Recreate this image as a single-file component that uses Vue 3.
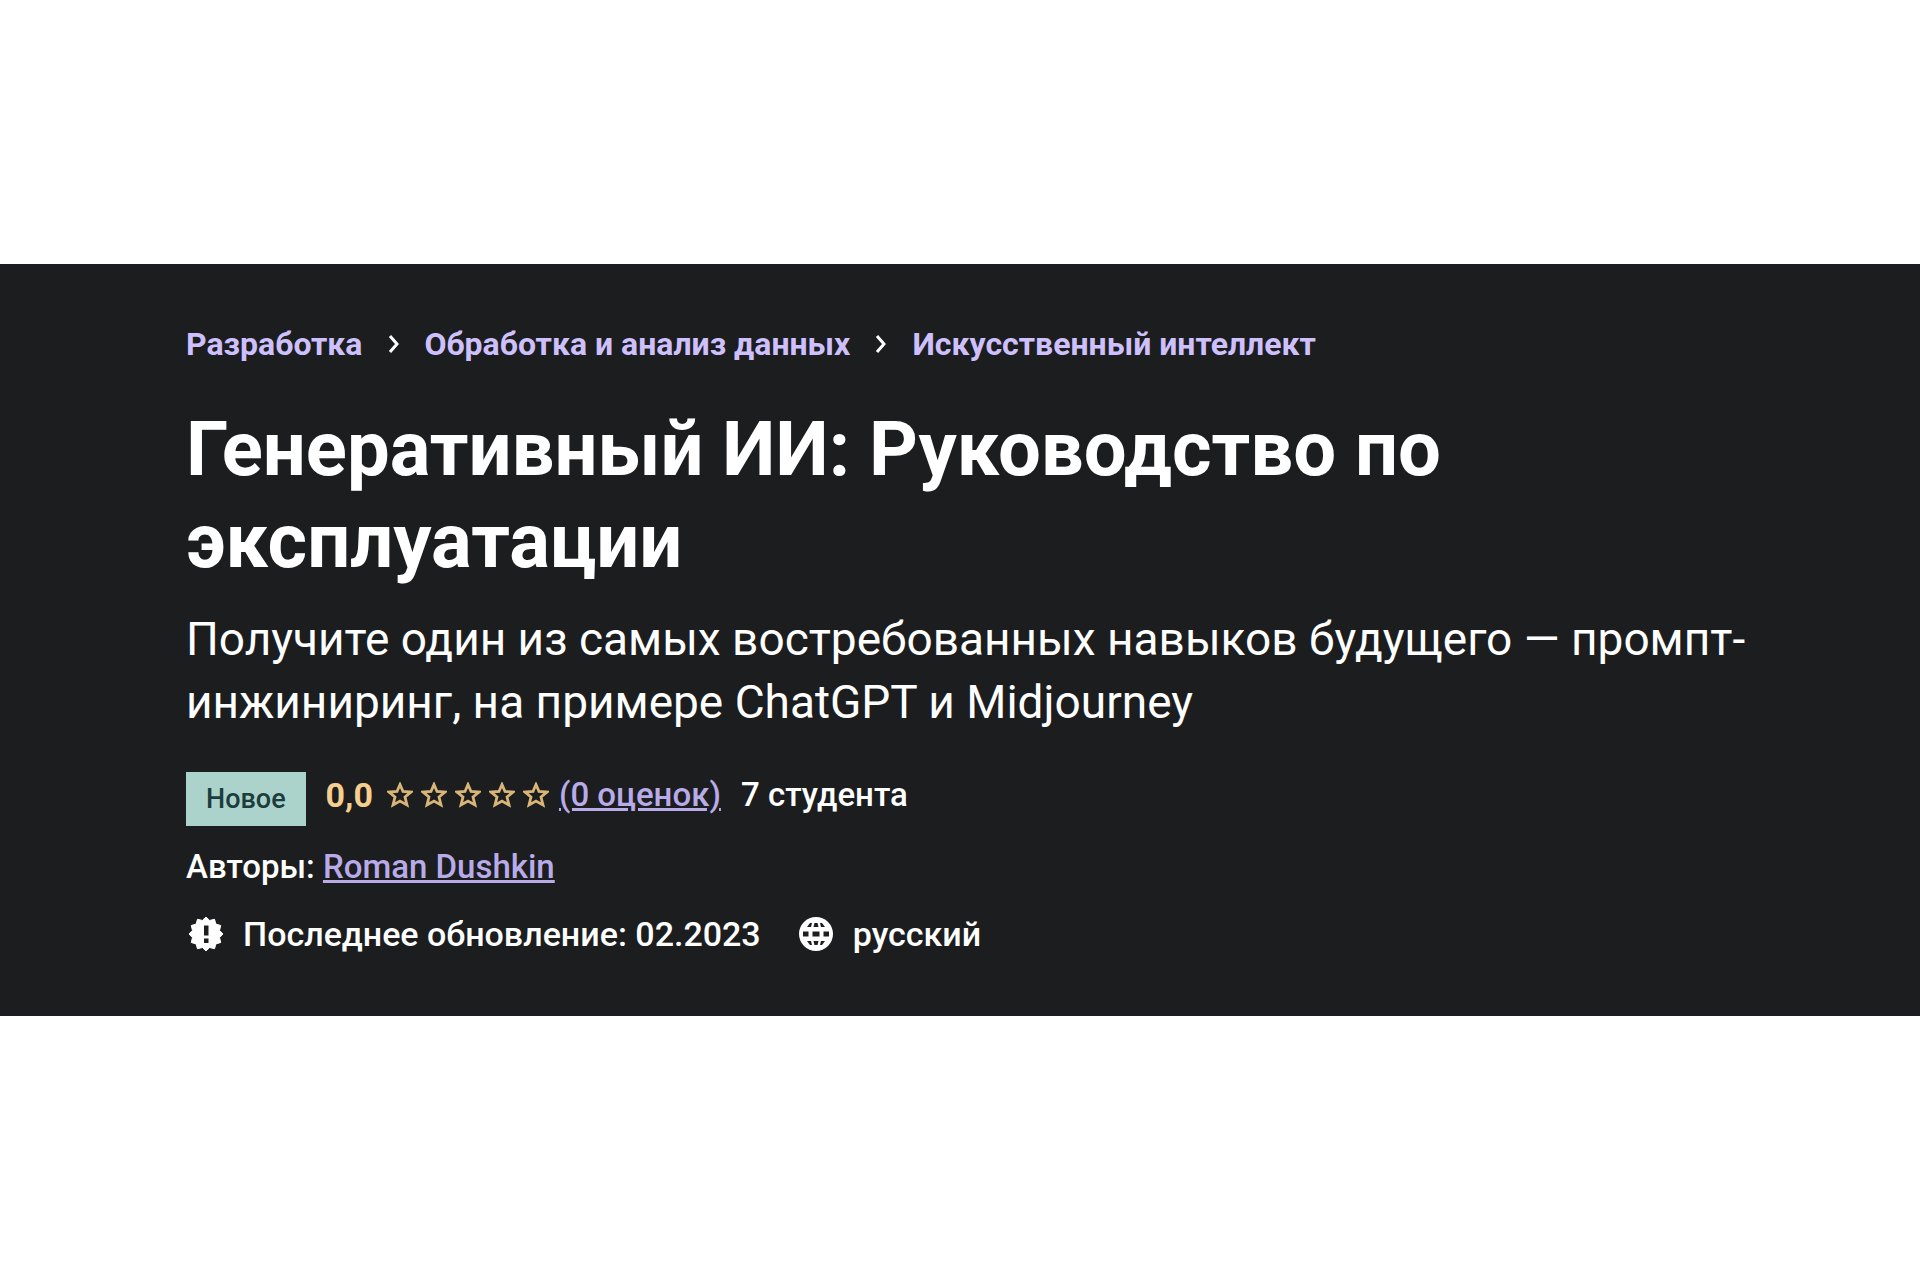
<script setup>
const crumbs = ['Разработка', 'Обработка и анализ данных', 'Искусственный интеллект']
const burst = Array.from({ length: 24 }, (_, i) => {
  const r = i % 2 ? 14 : 17
  const a = (i * Math.PI) / 12
  return `${17 + r * Math.sin(a)},${17 - r * Math.cos(a)}`
}).join(' ')
</script>

<template>
  <main class="page">
    <header class="hero">
      <nav class="crumbs" aria-label="Категории">
        <template v-for="(crumb, i) in crumbs" :key="crumb">
          <svg v-if="i" class="chevron" viewBox="0 0 12 20" aria-hidden="true">
            <path d="M2 2l7 8-7 8" fill="none" stroke="currentColor" stroke-width="3" />
          </svg>
          <a href="#">{{ crumb }}</a>
        </template>
      </nav>

      <h1 class="title">Генеративный ИИ: Руководство по эксплуатации</h1>
      <p class="lead">Получите один из самых востребованных навыков будущего — промпт-инжиниринг, на примере ChatGPT и Midjourney</p>

      <div class="rating">
        <span class="badge">Новое</span>
        <span class="score">0,0</span>
        <span class="stars" role="img" aria-label="0 из 5">
          <svg v-for="n in 5" :key="n" viewBox="0 0 26 26" aria-hidden="true">
            <path d="M13 2.500l3 7 8 .5-6 5 2 8-7-4-7 4 2-8-6-5 8-.5z" fill="none" stroke="currentColor" stroke-width="2.800" />
          </svg>
        </span>
        <a class="reviews" href="#">(0 оценок)</a>
        <span>7 студента</span>
      </div>

      <div class="authors">Авторы: <a href="#">Roman Dushkin</a></div>

      <div class="meta">
        <svg viewBox="0 0 34 34" aria-hidden="true">
          <polygon :points="burst" fill="currentColor" stroke="currentColor" stroke-linejoin="round" />
          <path d="M15 8.500h4.500v10H15zM15 21.500h4.500v4.500H15z" fill="#1c1d1f" />
        </svg>
        <span class="updated">Последнее обновление: 02.2023</span>
        <svg viewBox="0 0 34 34" aria-hidden="true">
          <circle cx="17" cy="17" r="17" fill="currentColor" />
          <path d="M8 10l3-4h2l-1 4zM14.500 10l1-4h3l1 4zM22 10l-1-4h2l3 4zM4 14.500h5.500v5H4zM13.500 14.500h7v5h-7zM24.500 14.500H30v5h-5.500zM8 24h4l1 4h-2zM14.500 24h5l-1 4h-3zM22 24h4l-3 4h-2z" fill="#1c1d1f" />
        </svg>
        <span>русский</span>
      </div>
    </header>
  </main>
</template>

<style>
body {
  margin: 0;
  background: #fff;
}
</style>

<style scoped>
.page {
  min-height: 100vh;
  display: flex;
  flex-direction: column;
  justify-content: center;
}
.hero {
  box-sizing: border-box;
  padding: 58px 170px 60px 186px;
  background: #1c1d1f;
  color: #fff;
  font: 500 33px/44px Roboto, sans-serif;
}
a {
  color: #cec0fc;
}
.crumbs {
  display: flex;
  align-items: center;
  gap: 25px;
  font-size: 32px;
  font-weight: 700;
}
.crumbs a {
  text-decoration: none;
}
.chevron {
  width: 12px;
  height: 20px;
}
.title {
  margin: 37px 0 0;
  max-width: 1400px;
  font-size: 76px;
  line-height: 92px;
  font-weight: 700;
}
.lead {
  margin: 21px 0 0;
  font-size: 46px;
  line-height: 63px;
  font-weight: 400;
}
.rating {
  display: flex;
  align-items: flex-start;
  margin-top: 38px;
  line-height: 46px;
}
.badge {
  padding: 4px 20px;
  margin-right: 20px;
  background: #acd2cc;
  color: #1d3d3c;
  font-size: 27px;
}
.score {
  color: #f6ce8e;
  font-size: 34px;
  font-weight: 700;
}
.stars {
  display: flex;
  align-items: center;
  gap: 8px;
  height: 46px;
  margin: 0 10px 0 14px;
  color: #d9b577;
}
.stars svg {
  width: 26px;
  height: 26px;
}
.reviews {
  margin-right: 20px;
  color: #b9abe8;
}
.authors {
  margin-top: 19px;
}
.authors a {
  color: #b9abe8;
}
.meta {
  display: flex;
  align-items: center;
  margin-top: 23px;
  font-size: 34px;
}
.meta svg {
  width: 34px;
  height: 34px;
  margin: 0 20px 0 3px;
}
.updated {
  margin-right: 35px;
}
</style>
